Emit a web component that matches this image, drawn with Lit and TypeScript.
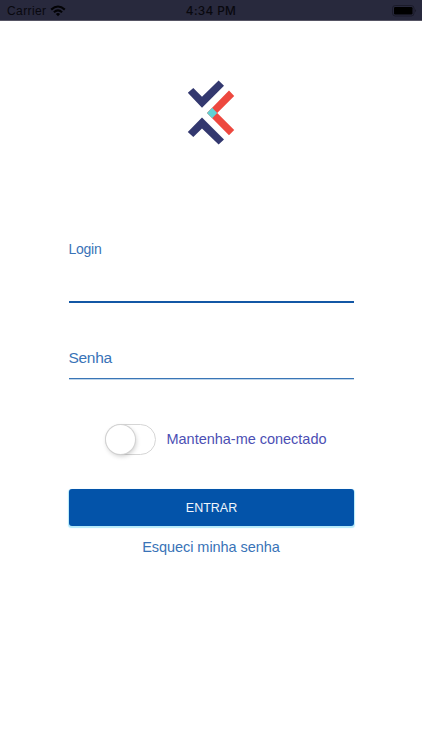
import { LitElement, html, css } from "lit";
import { customElement } from "lit/decorators.js";

@customElement("status-bar")
class StatusBar extends LitElement {
  static styles = css`
    :host {
      display: grid;
      grid-template-columns: 1fr auto 1fr;
      align-items: center;
      box-sizing: border-box;
      height: 21px;
      padding: 1px 5px 0 7px;
      background: #28293d;
      border-bottom: 1px solid #555463;
      color: #08080e;
      font-size: 12px;
      line-height: 20px;
    }
    .left { display: flex; align-items: center; gap: 4px; }
    .carrier { letter-spacing: 0.4px; }
    .time { margin-right: 2px; font-family: Inter, "Liberation Sans", sans-serif; font-weight: 500; letter-spacing: 0.35px; font-size: 11.8px; }
    .battery { justify-self: end; }
    svg { display: block; }
  `;
  render() {
    return html`
      <div class="left">
        <span class="carrier">Carrier</span>
        <svg width="16" height="12" viewBox="0 0 16 12">
          <g fill="none" stroke="#030306" stroke-width="2.1">
            <path d="M1.2 4.6Q8 -1.6 14.8 4.6" />
            <path d="M3.9 7.2Q8 3.5 12.1 7.2" />
          </g>
          <path d="M5.9 9Q8 7.2 10.1 9L8 11.2Z" fill="#030306" />
        </svg>
      </div>
      <span class="time">4:34 PM</span>
      <svg class="battery" width="25" height="12" viewBox="0 0 25 12">
        <rect x="0.5" y="0.5" width="21.5" height="10.5" rx="2.8" fill="none" stroke="#1b1b2a" />
        <rect x="2" y="2" width="18.5" height="7.5" rx="1.2" fill="#000" />
        <path d="M23.3 4Q24.8 5.8 23.3 7.6Z" fill="#141420" />
      </svg>
    `;
  }
}

@customElement("app-root")
class AppRoot extends LitElement {
  static styles = css`
    :host {
      display: flex;
      flex-direction: column;
      height: 750px;
      overflow: hidden;
      background: #fff;
      font-family: "Liberation Sans", Arial, sans-serif;
      color: #3973b7;
    }
    .content { display: flex; flex-direction: column; padding: 57px 68.5px 0 68.5px; }
    .logo { display: block; align-self: center; width: 50px; height: 70px; }
    .field { display: flex; flex-direction: column; box-sizing: border-box; }
    .login { height: 63px; margin-top: 92px; border-bottom: 2px solid #1357a5; }
    .login label { font-size: 14px; line-height: 19px; letter-spacing: -0.25px; }
    .senha { height: 32px; margin-top: 44px; border-bottom: 1px solid #3975b6; box-shadow: 0 1px #bfd5ea; }
    .senha label { font-size: 15.5px; line-height: 22px; letter-spacing: -0.3px; }
    .keep { display: flex; align-items: center; gap: 10.5px; height: 32px; margin: 44px 0 0 36.5px; color: #4c4fb4; }
    .switch { box-sizing: border-box; width: 51px; height: 31px; border: 1px solid #d6d6d6; border-radius: 16px; }
    .knob { width: 29px; height: 29px; border-radius: 50%; background: #fff; box-shadow: 0 0 0 1px #d2d2d2, 1px 2px 5px #00000038; }
    .keep-text { font-size: 14.5px; line-height: 20px; letter-spacing: -0.02px; white-space: nowrap; }
    .enter {
      height: 37px;
      margin: 34px -0.5px 0 0.5px;
      padding: 1px 0 0;
      border: 0;
      border-radius: 3px;
      background: #0353a9;
      box-shadow: 0 1px 1px 0.5px #b5eafa;
      color: #f0f6fc;
      font: 12.5px/36px "Liberation Sans", Arial, sans-serif;
    }
    .forgot { align-self: center; margin-top: 11px; font-size: 14.5px; line-height: 20px; letter-spacing: -0.05px; white-space: nowrap; }
  `;
  render() {
    return html`
      <status-bar></status-bar>
      <main class="content">
        <svg class="logo" viewBox="186 78 50 70">
          <path fill="#33386f" d="M187.8 92.8 193.3 87.9 202 96.8 218.6 80.6 224 85.7 202 107.8Z" />
          <path fill="#33386f" d="M202 117.4 224 139.4 218.6 144.6 202 128.4 193.3 137.1 187.8 132Z" />
          <path fill="#ed483f" d="M229 90.6 234.2 96 217.2 113 234.2 130 229 135.2 207 113Z" />
          <path fill="#5fd2d4" d="M212.2 107.8 217.2 113 212.2 118.2 207 113Z" />
        </svg>
        <div class="field login"><label>Login</label></div>
        <div class="field senha"><label>Senha</label></div>
        <div class="keep">
          <div class="switch"><div class="knob"></div></div>
          <span class="keep-text">Mantenha-me conectado</span>
        </div>
        <button class="enter">ENTRAR</button>
        <span class="forgot">Esqueci minha senha</span>
      </main>
    `;
  }
}
